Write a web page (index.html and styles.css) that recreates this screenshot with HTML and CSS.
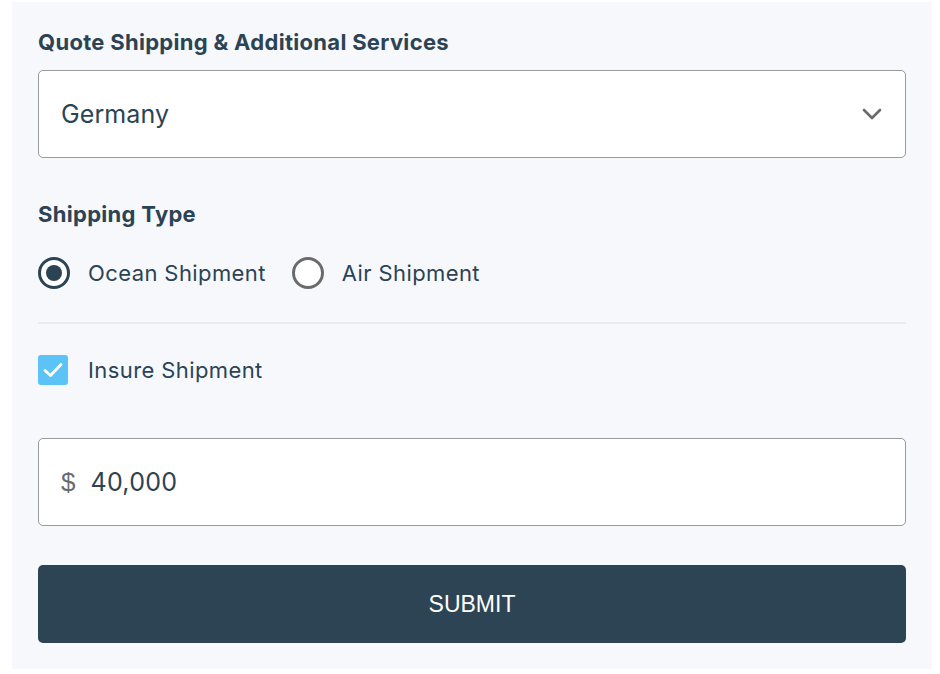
FILE: index.html
```html
<!DOCTYPE html>
<html lang="en">
<head>
    <meta charset="UTF-8" />
    <meta name="viewport" content="width=device-width, initial-scale=1.0"/>
    <title>Quote Shipping</title>
    <link rel="stylesheet" href="styles.css">
</head>
<body>
    <form class="quote-form">
        <h2 class="form-title">Quote Shipping &amp; Additional Services</h2>
        <div class="select-box">
            <span class="select-value">Germany</span>
            <svg class="chevron" width="20" height="12" viewBox="0 0 20 12">
                <path d="M2 2 L10 10 L18 2" fill="none" stroke="#6b6b6b" stroke-width="2.6" stroke-linecap="round" stroke-linejoin="round"/>
            </svg>
        </div>

        <h3 class="field-label">Shipping Type</h3>
        <div class="radio-row">
            <label class="radio-option">
                <span class="radio checked"></span>
                <span>Ocean Shipment</span>
            </label>
            <label class="radio-option">
                <span class="radio"></span>
                <span>Air Shipment</span>
            </label>
        </div>

        <hr class="divider">

        <label class="check-option">
            <span class="checkbox">
                <svg width="22" height="18" viewBox="0 0 22 18">
                    <path d="M3 9.5 L8.5 14.5 L19 3.5" fill="none" stroke="#fff" stroke-width="2.8" stroke-linecap="round" stroke-linejoin="round"/>
                </svg>
            </span>
            <span>Insure Shipment</span>
        </label>

        <div class="amount-box">
            <span class="currency">$</span>
            <span class="amount">40,000</span>
        </div>

        <button type="button" class="submit-btn">SUBMIT</button>
    </form>
</body>
</html>
```

FILE: styles.css
```css
body {
    margin: 0;
    background: #fff;
    font-family: 'Inter', 'Noto Sans', sans-serif;
    color: #2c4354;
}
.quote-form {
    margin: 2px 8px 0 12px;
    padding: 27px 26px 26px;
    background: #f6f8fc;
}
.form-title {
    margin: 0 0 15px;
    font-size: 22px;
    line-height: 26px;
    letter-spacing: 0.3px;
    font-weight: 700;
}
.select-box {
    display: flex;
    align-items: center;
    justify-content: space-between;
    height: 86px;
    padding: 0 23px 0 22px;
    background: #fff;
    border: 1px solid #9a9a9a;
    border-radius: 5px;
}
.select-value {
    font-size: 25px;
    letter-spacing: 0.1px;
}
.field-label {
    margin: 43px 0 30px;
    font-size: 22px;
    line-height: 26px;
    letter-spacing: 0.3px;
    font-weight: 700;
}
.radio-row {
    display: flex;
    align-items: center;
    gap: 26px;
}
.radio-option,
.check-option {
    display: flex;
    align-items: center;
    gap: 18px;
    font-size: 22px;
    letter-spacing: 0.4px;
}
.check-option {
    gap: 20px;
}
.radio {
    box-sizing: border-box;
    width: 32px;
    height: 32px;
    border: 3px solid #6b6b6b;
    border-radius: 50%;
    display: flex;
    align-items: center;
    justify-content: center;
    background: #fff;
}
.radio.checked {
    border: 3.5px solid #2c4354;
}
.radio.checked::after {
    content: "";
    width: 16px;
    height: 16px;
    border-radius: 50%;
    background: #2c4354;
}
.divider {
    margin: 33px 0 31px;
    border: none;
    height: 2px;
    background: #e9ebf0;
}
.checkbox {
    width: 30px;
    height: 30px;
    border-radius: 3px;
    background: #5bc3f5;
    display: flex;
    align-items: center;
    justify-content: center;
}
.amount-box {
    display: flex;
    align-items: center;
    gap: 15px;
    height: 86px;
    margin-top: 53px;
    padding: 0 22px;
    background: #fff;
    border: 1px solid #9a9a9a;
    border-radius: 5px;
}
.currency {
    font-family: 'Liberation Sans', Arial, sans-serif;
    font-size: 26px;
    color: #6b6b6b;
}
.amount {
    font-size: 25px;
    letter-spacing: 0.3px;
}
.submit-btn {
    display: block;
    width: 100%;
    height: 78px;
    margin-top: 39px;
    border: none;
    border-radius: 5px;
    background: #2d4454;
    color: #fff;
    font-family: 'Liberation Sans', Arial, sans-serif;
    font-size: 23px;
    cursor: pointer;
}
```
